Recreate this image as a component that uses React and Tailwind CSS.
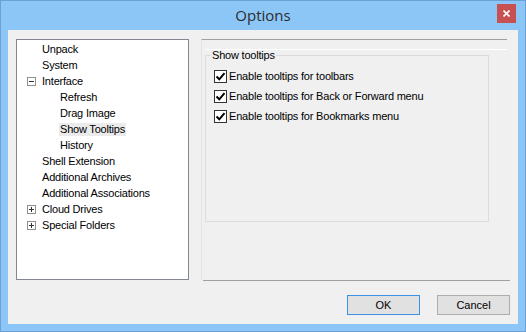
const TREE = [
  { label: 'Unpack', level: 0 },
  { label: 'System', level: 0 },
  { label: 'Interface', level: 0, toggle: 'minus' },
  { label: 'Refresh', level: 1 },
  { label: 'Drag Image', level: 1 },
  { label: 'Show Tooltips', level: 1, selected: true },
  { label: 'History', level: 1 },
  { label: 'Shell Extension', level: 0 },
  { label: 'Additional Archives', level: 0 },
  { label: 'Additional Associations', level: 0 },
  { label: 'Cloud Drives', level: 0, toggle: 'plus' },
  { label: 'Special Folders', level: 0, toggle: 'plus' },
];

const OPTIONS = [
  'Enable tooltips for toolbars',
  'Enable tooltips for Back or Forward menu',
  'Enable tooltips for Bookmarks menu',
];

function Toggle({ kind }) {
  return (
    <span className="w-[9px] h-[9px] border border-[#919191] bg-white flex items-center justify-center">
      <svg width="7" height="7" viewBox="0 0 7 7">
        <path d="M1 3.5h5" stroke="#333" strokeWidth="1" />
        {kind === 'plus' && <path d="M3.5 1v5" stroke="#333" strokeWidth="1" />}
      </svg>
    </span>
  );
}

function TreeRow({ item }) {
  return (
    <div className="h-[16px] flex items-center">
      <div className="w-[25px] shrink-0 flex justify-end pr-[6px]">
        {item.toggle && <Toggle kind={item.toggle} />}
      </div>
      <span
        className={`leading-[13px] h-[13px] ${item.level === 1 ? 'ml-[17px] px-px' : ''} ${
          item.selected ? 'bg-[#ebebeb]' : ''
        }`}
      >
        {item.label}
      </span>
    </div>
  );
}

function Checkbox() {
  return (
    <span className="w-[13px] h-[13px] border border-[#333] bg-white flex items-center justify-center shrink-0">
      <svg width="11" height="11" viewBox="0 0 11 11">
        <path d="M1.5 5.5l2.8 2.8L9.5 2.2" fill="none" stroke="#000" strokeWidth="2" />
      </svg>
    </span>
  );
}

export default function App() {
  return (
    <div
      className="w-[526px] h-[332px] bg-[#8bc6f7] border border-[#6c9fd4] flex flex-col text-[11px] text-black tracking-[-0.2px]"
      style={{ fontFamily: '"Liberation Sans", Arial, sans-serif' }}
    >
      <div className="h-[29px] grid grid-cols-[1fr_auto_1fr] items-center tracking-normal">
        <div />
        <div className="text-[15px] text-[#2b2b2b] font-['Open_Sans',sans-serif]">Options</div>
        <div className="flex justify-end pr-[9px] pb-[4px]">
          <div className="w-[19px] h-[19px] bg-[#c75050] flex items-center justify-center">
            <svg width="7" height="7" viewBox="0 0 7 7">
              <path d="M0.5 0.5l6 6M6.5 0.5l-6 6" stroke="#fff" strokeWidth="1.6" />
            </svg>
          </div>
        </div>
      </div>

      <div className="mx-[7px] h-[294px] bg-[#f0f0f0] flex flex-col px-2 pt-[9px]">
        <div className="flex gap-[12px]">
          <div className="w-[173px] h-[241px] border border-[#828790] bg-white pt-px">
            {TREE.map((item) => (
              <TreeRow key={item.label} item={item} />
            ))}
          </div>

          <div className="w-[309px] flex flex-col">
            <div className="h-[241px] mr-[3px] border-t border-[#a0a0a0] border-l border-l-[#e3e3e3] pl-[3px] pt-[9px]">
              <div className="border-t border-white h-full">
                <fieldset className="w-[284px] h-[174px] border border-[#dcdcdc] px-[8px] -mt-[2px]">
                  <legend className="-ml-[3px] px-px leading-[15px]">Show tooltips</legend>
                  <div className="pt-[3px] flex flex-col">
                    {OPTIONS.map((label) => (
                      <div key={label} className="h-[20px] flex items-center gap-[2px]">
                        <Checkbox />
                        <span>{label}</span>
                      </div>
                    ))}
                  </div>
                </fieldset>
              </div>
            </div>
            <div className="ml-[2px] h-px bg-[#a0a0a0]" />
          </div>
        </div>

        <div className="flex justify-end gap-[17px] mt-[14px] tracking-normal">
          <button className="w-[73px] h-[20px] bg-[#e1e1e1] border border-[#3c93e5] text-[11px]">OK</button>
          <button className="w-[73px] h-[20px] bg-[#e1e1e1] border border-[#adadad] text-[11px]">Cancel</button>
        </div>
      </div>
    </div>
  );
}
